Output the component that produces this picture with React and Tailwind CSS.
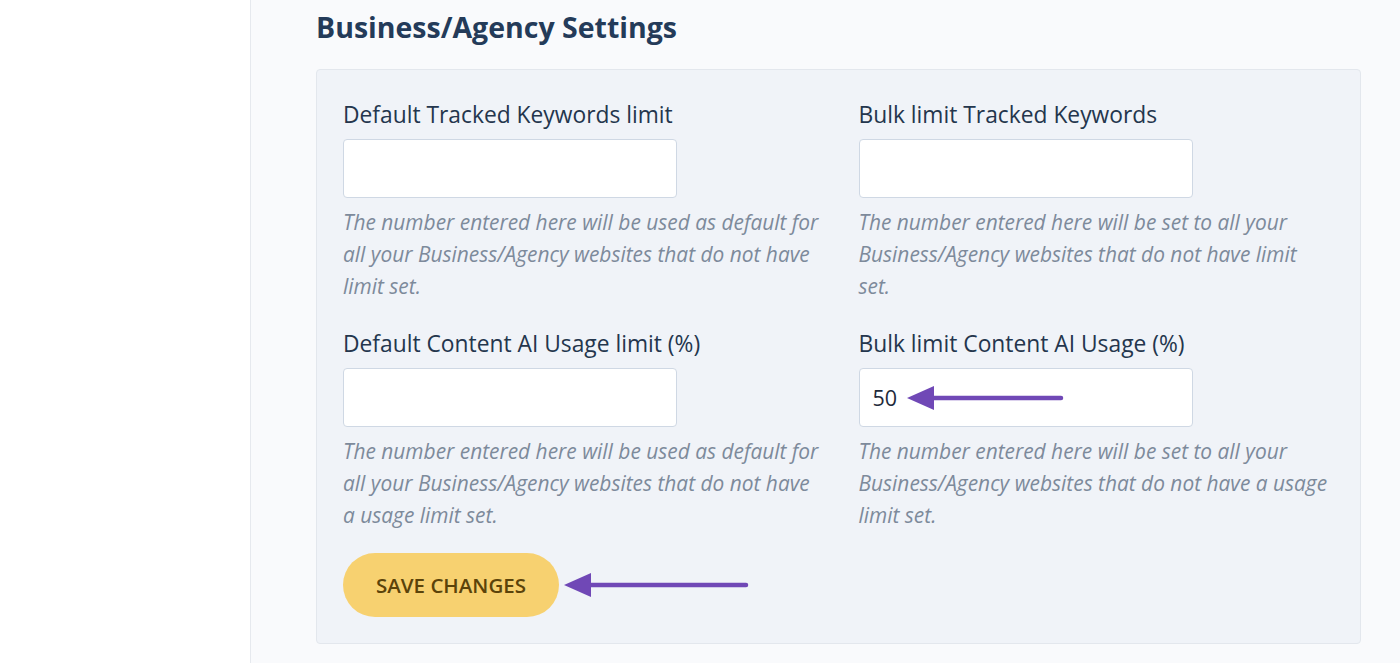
import React from "react";

function Arrow({ width, className }) {
  // purple annotation arrow pointing left
  return (
    <svg width={width} height="28" viewBox={`0 0 ${width} 28`} className={className}>
      <line x1="26" y1="14" x2={width - 3} y2="14" stroke="#7048b6" strokeWidth="4.5" strokeLinecap="round" />
      <polygon points="1,14 28,2 28,26" fill="#7048b6" />
    </svg>
  );
}

function Field({ label, value, help, arrow, narrow }) {
  return (
    <div className="flex flex-col">
      <label className="text-[22.8px] leading-[30px] text-[#24364d]">{label}</label>
      <div className="relative mt-[9px] w-[334px]">
        <input
          readOnly
          value={value || ""}
          className="h-[59px] w-full rounded-[4px] border border-[#cfd8e4] bg-white px-[13px] text-[21.5px] text-[#1e2a3a] outline-none"
        />
        {arrow && <Arrow width={158} className="absolute left-[47px] top-[16px]" />}
      </div>
      <p className={`mt-[8px] text-[20.9px] italic leading-[32px] text-[#7d8a9b] ${narrow ? "max-w-[466px]" : ""}`}>{help}</p>
    </div>
  );
}

export default function App() {
  return (
    <div className="flex h-[663px] w-full overflow-hidden font-['Open_Sans',sans-serif]">
      <aside className="w-[251px] shrink-0 border-r border-[#e6e9ee] bg-white" />
      <main className="flex-1 bg-[#f9fafc] pl-[65px] pr-[39px]">
        <h2 className="pt-[9px] text-[28.5px] font-bold leading-[36px] text-[#243b59]">Business/Agency Settings</h2>
        <div className="mt-[24px] rounded-[4px] border border-[#e3e7ed] bg-[#f0f3f8] px-[26px] pb-[26px] pt-[30px]">
          <div className="grid grid-cols-2 gap-x-[40px] gap-y-[27px]">
            <Field
              label="Default Tracked Keywords limit"
              help="The number entered here will be used as default for all your Business/Agency websites that do not have limit set."
            />
            <Field
              label="Bulk limit Tracked Keywords"
              narrow
              help="The number entered here will be set to all your Business/Agency websites that do not have limit set."
            />
            <Field
              label="Default Content AI Usage limit (%)"
              help="The number entered here will be used as default for all your Business/Agency websites that do not have a usage limit set."
            />
            <Field
              label="Bulk limit Content AI Usage (%)"
              value="50"
              arrow
              help="The number entered here will be set to all your Business/Agency websites that do not have a usage limit set."
            />
          </div>
          <div className="mt-[22px] flex items-center">
            <button className="h-[64px] w-[216px] rounded-full bg-[#f7d170] text-[20.5px] font-semibold text-[#5b430a]">
              SAVE CHANGES
            </button>
            <Arrow width={186} className="ml-[4px]" />
          </div>
        </div>
      </main>
    </div>
  );
}
